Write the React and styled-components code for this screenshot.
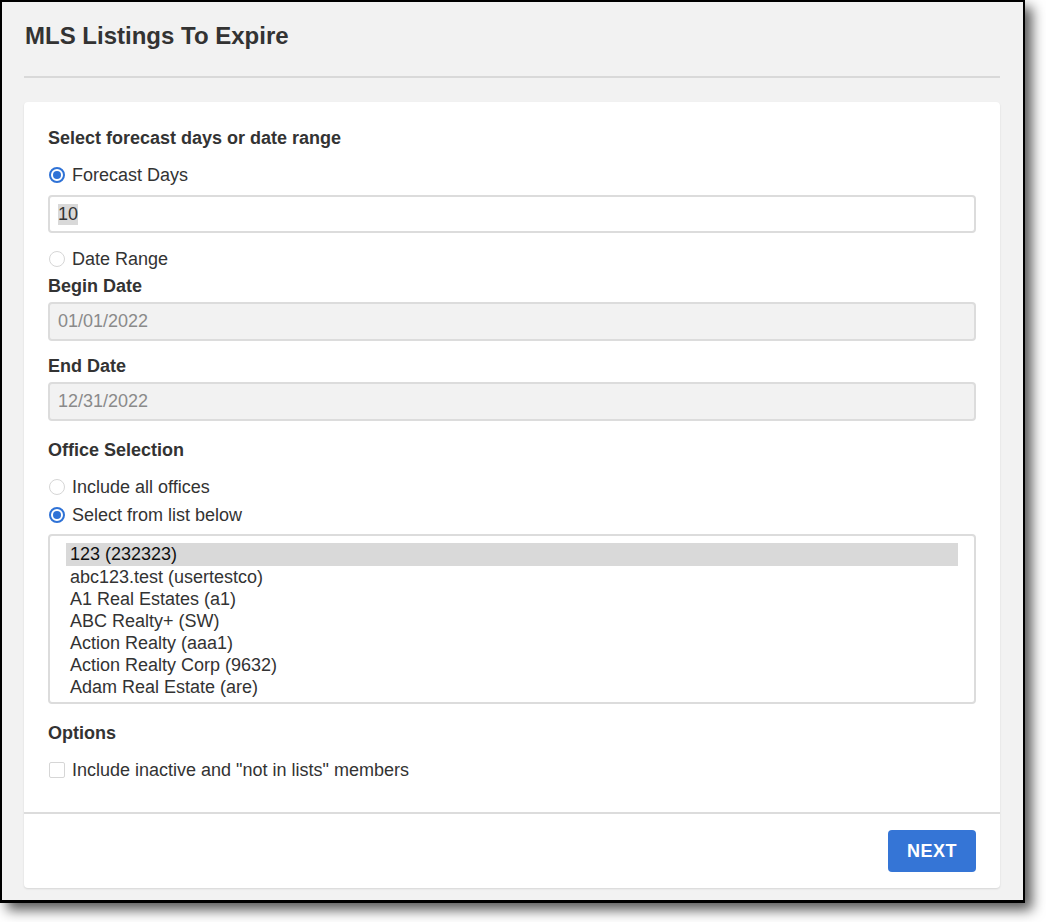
import React, { useState } from 'react';
import styled, { createGlobalStyle } from 'styled-components';

const GlobalStyle = createGlobalStyle`
  html, body {
    margin: 0;
    padding: 0;
    background: #fff;
  }
  body {
    font-family: "Liberation Sans", Arial, sans-serif;
    color: #333;
    min-height: 922px;
  }
  * { box-sizing: border-box; }
`;

// 페이지 전체 (창 아래 그림자가 보이도록 여백 확보)
const Page = styled.div`
  min-height: 922px;
  padding-bottom: 19px;
`;

// 바깥 창 (검은 테두리 + 그림자)
const Window = styled.div`
  width: 1025px;
  height: 903px;
  border: 2px solid #000;
  border-bottom-width: 3px;
  background: #f2f2f2;
  box-shadow: 7px 7px 12px rgba(0, 0, 0, 0.65);
  padding: 0 23px 0 22px;
  display: flex;
  flex-direction: column;
`;

const Header = styled.div`
  padding: 20px 0 26px 1px;
  border-bottom: 2px solid #d9d9d9;
`;

const Title = styled.h1`
  margin: 0;
  font-size: 24px;
  line-height: 28px;
  font-weight: bold;
  color: #333;
`;

const Card = styled.div`
  margin-top: 24px;
  background: #fff;
  border-radius: 4px;
  box-shadow: 0 1px 2px rgba(0, 0, 0, 0.12);
  display: flex;
  flex-direction: column;
`;

const CardBody = styled.div`
  padding: 25px 24px 31px;
  display: flex;
  flex-direction: column;
`;

const SectionLabel = styled.div`
  font-size: 18px;
  line-height: 22px;
  font-weight: bold;
  color: #333;
  margin-top: ${({ mt }) => mt || 0}px;
`;

const Choice = styled.label`
  display: flex;
  align-items: center;
  gap: 7px;
  font-size: 18px;
  line-height: 22px;
  color: #333;
  margin-top: ${({ mt }) => mt || 0}px;
  cursor: pointer;
`;

const Radio = styled.input.attrs({ type: 'radio' })`
  appearance: none;
  margin: 0 0 0 1px;
  width: 16px;
  height: 16px;
  border-radius: 50%;
  border: ${({ checked }) => (checked ? '2px solid #2f72d6' : '1.5px solid #d6d6d6')};
  background: #fff;
  display: grid;
  place-items: center;
  &:checked::after {
    content: '';
    width: 8px;
    height: 8px;
    border-radius: 50%;
    background: #2f72d6;
  }
`;

const Checkbox = styled.input.attrs({ type: 'checkbox' })`
  appearance: none;
  margin: 0 0 0 1px;
  width: 16px;
  height: 16px;
  border: 1.5px solid #d6d6d6;
  border-radius: 2px;
  background: #fff;
`;

const Field = styled.div`
  height: ${({ h }) => h || 38}px;
  margin-top: ${({ mt }) => mt || 0}px;
  border: 2px solid #dcdcdc;
  border-radius: 4px;
  background: ${({ disabled }) => (disabled ? '#f2f2f2' : '#fff')};
  color: ${({ disabled }) => (disabled ? '#8a8a8a' : '#333')};
  font-size: 18px;
  display: flex;
  align-items: center;
  padding: 0 8px;
`;

const Selected = styled.span`
  background: #d9d9d9;
  line-height: 21px;
`;

const ListBox = styled.div`
  height: 170px;
  margin-top: 8px;
  border: 2px solid #dcdcdc;
  border-radius: 4px;
  padding: 7px 16px;
  overflow: hidden;
`;

const Option = styled.div`
  font-size: 18px;
  line-height: 22px;
  padding-left: 4px;
  color: #333;
  background: ${({ active }) => (active ? '#d9d9d9' : 'transparent')};
  ${({ active }) => active && 'color: #111; height: 23px; line-height: 23px;'}
`;

const Footer = styled.div`
  border-top: 2px solid #dcdcdc;
  padding: 16px 24px;
  display: flex;
  justify-content: flex-end;
`;

const NextButton = styled.button`
  width: 88px;
  height: 42px;
  border: none;
  border-radius: 4px;
  background: #3575d6;
  color: #fff;
  font-family: "Liberation Sans", Arial, sans-serif;
  font-size: 18px;
  font-weight: bold;
  letter-spacing: 0.5px;
  cursor: pointer;
`;

const offices = [
  '123 (232323)',
  'abc123.test (usertestco)',
  'A1 Real Estates (a1)',
  'ABC Realty+ (SW)',
  'Action Realty (aaa1)',
  'Action Realty Corp (9632)',
  'Adam Real Estate (are)',
];

const App = () => {
  const [mode, setMode] = useState('days');
  const [officeMode, setOfficeMode] = useState('list');
  const [selected, setSelected] = useState(0);
  const [inactive, setInactive] = useState(false);

  return (
    <Page>
      <GlobalStyle />
      <Window>
        <Header>
          <Title>MLS Listings To Expire</Title>
        </Header>
        <Card>
          <CardBody>
            <SectionLabel>Select forecast days or date range</SectionLabel>
            <Choice mt={15}>
              <Radio name="range" checked={mode === 'days'} onChange={() => setMode('days')} />
              Forecast Days
            </Choice>
            <Field mt={9}>
              <Selected>10</Selected>
            </Field>
            <Choice mt={15}>
              <Radio name="range" checked={mode === 'range'} onChange={() => setMode('range')} />
              Date Range
            </Choice>
            <SectionLabel mt={5}>Begin Date</SectionLabel>
            <Field mt={5} h={39} disabled>01/01/2022</Field>
            <SectionLabel mt={14}>End Date</SectionLabel>
            <Field mt={5} h={39} disabled>12/31/2022</Field>

            <SectionLabel mt={18}>Office Selection</SectionLabel>
            <Choice mt={15}>
              <Radio name="office" checked={officeMode === 'all'} onChange={() => setOfficeMode('all')} />
              Include all offices
            </Choice>
            <Choice mt={6}>
              <Radio name="office" checked={officeMode === 'list'} onChange={() => setOfficeMode('list')} />
              Select from list below
            </Choice>
            <ListBox>
              {offices.map((o, i) => (
                <Option key={o} active={i === selected} onClick={() => setSelected(i)}>
                  {o}
                </Option>
              ))}
            </ListBox>

            <SectionLabel mt={18}>Options</SectionLabel>
            <Choice mt={15}>
              <Checkbox checked={inactive} onChange={() => setInactive(!inactive)} />
              Include inactive and "not in lists" members
            </Choice>
          </CardBody>
          <Footer>
            <NextButton>NEXT</NextButton>
          </Footer>
        </Card>
      </Window>
    </Page>
  );
};

export default App;
